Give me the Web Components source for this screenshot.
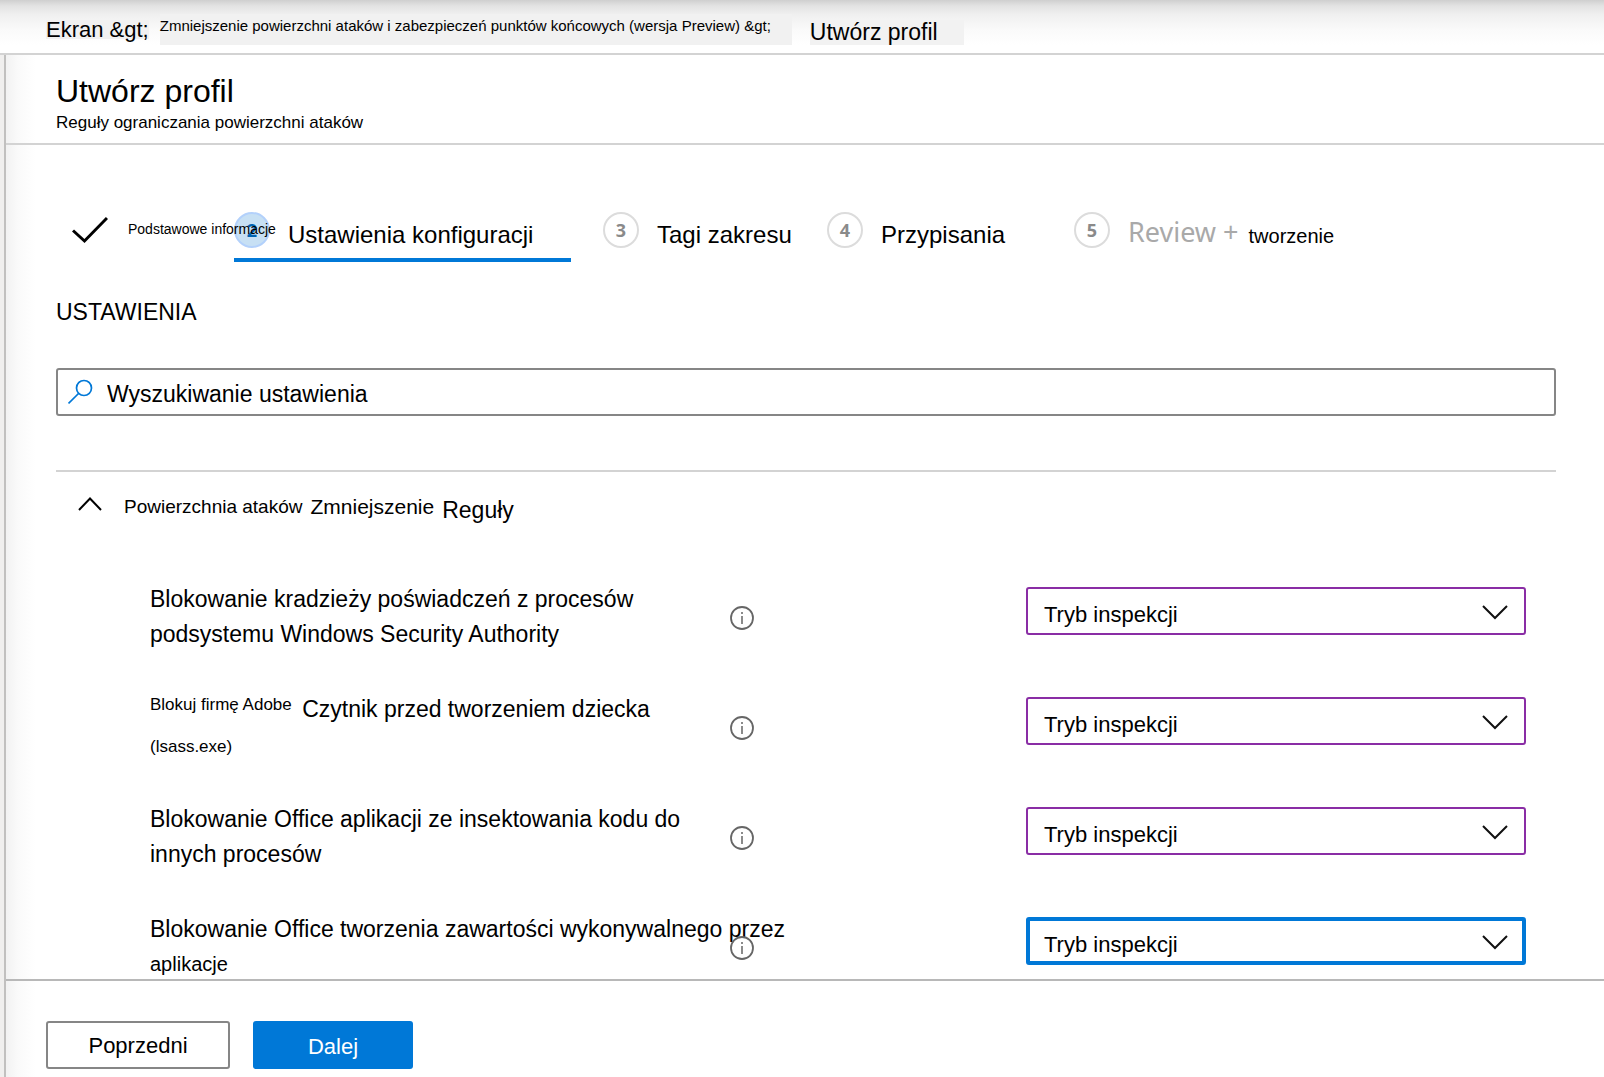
<!DOCTYPE html>
<html lang="pl">
<head>
<meta charset="utf-8">
<title>Utwórz profil</title>
<style>
  html, body { margin: 0; height: 100%; }
  body { font-family: "Liberation Sans", Arial, sans-serif; font-size: 23px; color: #000; background: #fff; }
</style>
</head>
<body>
<profile-page>
  <crumb-bar slot="crumbs"></crumb-bar>
  <page-title slot="title" heading="Utwórz profil" note="Reguły ograniczania powierzchni ataków"></page-title>
  <step-list>
    <wizard-step state="done">Podstawowe informacje</wizard-step>
    <wizard-step state="active" number="2">Ustawienia konfiguracji</wizard-step>
    <wizard-step number="3">Tagi zakresu</wizard-step>
    <wizard-step number="4">Przypisania</wizard-step>
    <wizard-step number="5" muted="Review +" state="last">tworzenie</wizard-step>
  </step-list>
  <settings-search></settings-search>
  <rule-group>
    <rule-row><span>Blokowanie kradzieży poświadczeń z procesów</span><span>podsystemu Windows Security Authority</span></rule-row>
    <rule-row mixed><span>Czytnik przed tworzeniem dziecka</span></rule-row>
    <rule-row><span>Blokowanie Office aplikacji ze insektowania kodu do</span><span>innych procesów</span></rule-row>
    <rule-row focused><span>Blokowanie Office tworzenia zawartości wykonywalnego przez</span><span class="mid" slot="end">aplikacje</span></rule-row>
  </rule-group>
  <wizard-footer slot="footer"></wizard-footer>
</profile-page>

<script>
const define = (name, render) => customElements.define(name, class extends HTMLElement {
  constructor() {
    super();
    this.attachShadow({ mode: "open" });
  }
  connectedCallback() {
    this.shadowRoot.innerHTML = "<style>*{box-sizing:border-box}</style>" + render(this);
  }
});

define("profile-page", () => `
  <style>
    :host { display: flex; flex-direction: column; height: 100vh; overflow: hidden; }
    .below { flex: 1; min-height: 0; display: flex; }
    .rail { width: 4px; background: #f0efee; }
    .panel { flex: 1; min-width: 0; display: flex; flex-direction: column; border-left: 2px solid #c1c0bf;
      background: linear-gradient(90deg, #f2f2f2, #fafafa 12px, #fff 30px); }
    main { flex: 1; min-height: 0; overflow: hidden; padding: 67px 48px 0 50px; }
  </style>
  <slot name="crumbs"></slot>
  <div class="below">
    <div class="rail"></div>
    <div class="panel">
      <slot name="title"></slot>
      <main><slot></slot></main>
      <slot name="footer"></slot>
    </div>
  </div>`);

define("crumb-bar", () => `
  <style>
    :host { display: block; }
    nav { display: flex; align-items: flex-end; height: 55px; padding: 0 46px 8px;
      border-bottom: 2px solid #d3d3d3; background: linear-gradient(#cfcfcf, #e3e3e3 6px, #f0f0f0 15px, #fafafa 30px, #fff 45px); }
    a { color: inherit; text-decoration: none; white-space: nowrap; background: #f1f1f1; }
    .root { font-size: 22px; line-height: 19px; margin: 0 11px 6px 0; }
    .mid { font-size: 15px; line-height: 24px; padding: 0 21px 7px 0; margin-right: 18px; }
    .here { font-size: 23px; line-height: 25px; padding-right: 26px; background: #f2f2f2; }
  </style>
  <nav aria-label="Ścieżka">
    <a class="root" href="#">Ekran &amp;gt;</a>
    <a class="mid" href="#">Zmniejszenie powierzchni ataków i zabezpieczeń punktów końcowych (wersja Preview) &amp;gt;</a>
    <a class="here" href="#">Utwórz profil</a>
  </nav>`);

define("page-title", el => `
  <style>
    :host { display: block; padding: 16px 50px 9px; border-bottom: 2px solid #d3d3d3; }
    h1 { margin: 0; font-weight: 400; font-size: 32px; line-height: 40px; }
    p { margin: 0; font-size: 17px; line-height: 23px; }
  </style>
  <h1>${el.getAttribute("heading")}</h1>
  <p>${el.getAttribute("note")}</p>`);

define("step-list", () => `
  <style>
    :host { display: grid; grid-template-columns: 130px 337px 192px 215px auto; column-gap: 32px;
      padding-left: 16px; height: 50px; }
  </style>
  <slot></slot>`);

define("wizard-step", el => {
  const state = el.getAttribute("state");
  const mark = state === "done"
    ? `<svg width="36" height="36" viewBox="0 0 36 36" fill="none" stroke="#000" stroke-width="3"><path d="M1 18.500l11.500 10.500L35 6"/></svg>`
    : `<span class="dot">${el.getAttribute("number")}</span>`;
  const muted = el.getAttribute("muted");
  return `
  <style>
    :host { display: block; min-width: 0; }
    button { display: flex; align-items: flex-start; width: 100%; height: 50px; padding: 0; border: 0;
      border-bottom: 4px solid transparent; background: none; font: inherit; font-size: 24px; color: inherit; white-space: nowrap; }
    .dot { flex: none; width: 36px; height: 36px; border: 2px solid #dcdcdc; border-radius: 50%; text-align: center;
      font: 700 18px/33px "Open Sans", sans-serif; color: #8a8a8a; background: #fff; }
    .text { line-height: 46px; margin-left: 18px; }
    .muted { font: 27px/40px "Noto Sans", sans-serif; color: #a9a9a9; margin-left: 18px; }
    svg { flex: none; }
    :host([state="done"]) { position: relative; z-index: 1; }
    :host([state="done"]) .text { font-size: 14px; line-height: 34px; margin-left: 20px; }
    :host([state="active"]) button { border-bottom-color: #0078d7; }
    :host([state="active"]) .dot { background: #c7e0f4; border-color: #b3d1fb; color: #0063b1; }
    :host([state="last"]) .text { font-size: 20px; line-height: 48px; margin-left: 10px; }
  </style>
  <button type="button">${mark}${muted ? `<span class="muted">${muted}</span>` : ""}<span class="text"><slot></slot></span></button>`;
});

define("settings-search", () => `
  <style>
    :host { display: block; padding: 35px 0 54px; border-bottom: 2px solid #d3d3d3; }
    h2 { margin: 0 0 41px; font-weight: 400; font-size: 23px; line-height: 30px; }
    .box { display: flex; align-items: center; gap: 13px; height: 48px; padding: 0 10px; border: 2px solid #868686; border-radius: 3px; background: #fff; }
    svg { flex: none; }
    input { flex: 1; min-width: 0; height: 44px; padding: 4px 0 0; border: 0; outline: 0; background: none; font: inherit; color: #000; }
    input::placeholder { color: #000; opacity: 1; }
  </style>
  <h2>USTAWIENIA</h2>
  <div class="box">
    <svg width="26" height="26" viewBox="0 0 26 26" fill="none" stroke="#0078d7" stroke-width="1.700"><circle cx="16" cy="9" r="7.500"/><path d="M10.500 14.500L.5 24.500"/></svg>
    <input type="search" aria-label="Wyszukiwanie ustawienia" placeholder="Wyszukiwanie ustawienia">
  </div>`);

define("rule-group", () => `
  <style>
    :host { display: block; }
    button { display: flex; align-items: flex-start; gap: 8px; padding: 15px 0 0 22px; margin-bottom: 49px;
      border: 0; background: none; font: inherit; color: inherit; line-height: 40px; }
    svg { margin: 10px 14px 0 0; }
    .a { font-size: 19px; } .b { font-size: 21px; } .c { line-height: 46px; }
    .rows { padding: 0 30px 0 94px; }
  </style>
  <button type="button" aria-expanded="true">
    <svg width="24" height="14" viewBox="0 0 24 14" fill="none" stroke="#000" stroke-width="2"><path d="M1 13L12 1.500L23 13"/></svg>
    <span class="a">Powierzchnia ataków</span><span class="b">Zmniejszenie</span><span class="c">Reguły</span>
  </button>
  <div class="rows"><slot></slot></div>`);

define("rule-row", el => `
  <style>
    :host { display: grid; grid-template-columns: 580px 296px 1fr; height: 110px; align-items: start; }
    label { display: block; line-height: 35px; white-space: nowrap; }
    ::slotted(span) { display: block; }
    :host([mixed]) ::slotted(span) { display: inline; margin-left: 4px; }
    ::slotted(.mid) { font-size: 20px; }
    .small { font-size: 17px; line-height: 17px; }
    .up { vertical-align: 7px; }
    .tip { width: 24px; height: 24px; margin-top: 24px; padding: 0; border: 0; background: none; }
    .tip svg, .pick svg { display: block; }
    .pick { display: grid; margin-top: 5px; align-items: center; }
    select { grid-area: 1 / 1; width: 100%; height: 48px; padding: 6px 48px 0 16px; appearance: none; outline: 0;
      border: 2px solid #8a2da5; border-radius: 3px; background: #fff; font: inherit; font-size: 22px; color: #000; }
    :host([focused]) select { border: 4px solid #0078d7; padding: 6px 46px 0 14px; }
    .pick svg { grid-area: 1 / 1; justify-self: end; margin: 2px 17px 0 0; pointer-events: none; }
  </style>
  <label for="mode">${el.hasAttribute("mixed") ? `<span class="small up">Blokuj firmę Adobe</span> ` : ""}<slot></slot><slot name="end"></slot>${el.hasAttribute("mixed") ? `<br><span class="small">(lsass.exe)</span>` : ""}</label>
  <button class="tip" type="button" aria-label="Informacje">
    <svg width="24" height="24" viewBox="0 0 24 24" fill="none" stroke="#666" stroke-width="1.800"><circle cx="12" cy="12" r="11"/><path d="M12 10v8M12 6v2" stroke-width="1.500"/></svg>
  </button>
  <div class="pick">
    <select id="mode"><option>Tryb inspekcji</option></select>
    <svg width="28" height="16" viewBox="0 0 28 16" fill="none" stroke="#111" stroke-width="2"><path d="M2 2L14 14L26 2"/></svg>
  </div>`);

define("wizard-footer", () => `
  <style>
    :host { display: flex; gap: 23px; height: 98px; box-sizing: border-box; padding: 40px 40px 8px; border-top: 2px solid #b8b8b8; }
    button { height: 48px; padding: 2px 0 0; border-radius: 3px; font: inherit; font-size: 22px; }
    .back { width: 184px; border: 2px solid #868686; background: #fff; color: #000; }
    .next { width: 160px; border: 0; background: #0078d7; color: #fff; padding-top: 4px; }
  </style>
  <button class="back" type="button">Poprzedni</button>
  <button class="next" type="button">Dalej</button>`);
</script>
</body>
</html>
